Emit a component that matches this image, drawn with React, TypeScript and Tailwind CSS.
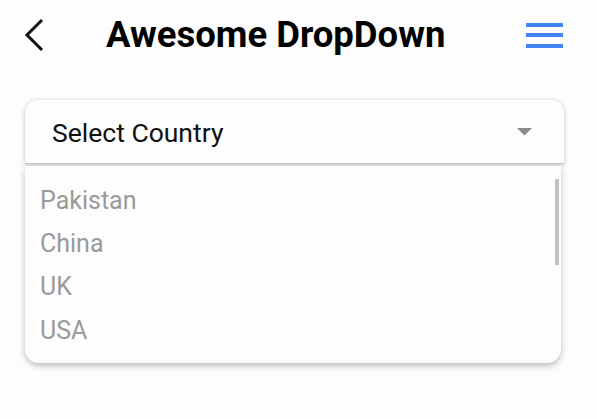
import React from "react";

export default function App() {
  const items = ["Pakistan", "China", "UK", "USA"];
  return (
    <div
      className="w-[597px] h-[419px] bg-[#fdfdfd] overflow-hidden"
      style={{ fontFamily: "Roboto, 'Liberation Sans', sans-serif" }}
    >
      <div className="h-[70px] flex items-center pl-[24px] pr-[34px]">
        <svg width="20" height="34" viewBox="0 0 20 34" className="shrink-0">
          <path d="M18 2 L3 17 L18 32" fill="none" stroke="#111" strokeWidth="3" />
        </svg>
        <div className="ml-[62px] text-[36.5px] font-bold text-black leading-none">
          Awesome DropDown
        </div>
        <div className="ml-auto flex flex-col gap-[6.5px]">
          <div className="w-[37px] h-[4px] bg-[#3f86f4]" />
          <div className="w-[37px] h-[4px] bg-[#3f86f4]" />
          <div className="w-[37px] h-[4px] bg-[#3f86f4]" />
        </div>
      </div>
      <div className="pl-[25px] pr-[33px] pt-[30px]">
        <div className="h-[64px] bg-[#fdfdfd] rounded-t-[13px] shadow-[0_1px_5px_rgba(0,0,0,0.25)] flex items-center pl-[27px] pr-[32px] border-b border-[#c8c8c8]">
          <span className="text-[26.5px] text-[#111] mt-[2px]">Select Country</span>
          <svg width="15" height="8" viewBox="0 0 15 8" className="ml-auto">
            <path d="M0 0 L15 0 L7.5 7.5 Z" fill="#8a8a8a" />
          </svg>
        </div>
        <div className="mt-[2px] mr-[3px] h-[197px] bg-[#fdfdfd] rounded-b-[14px] shadow-[0_3px_6px_rgba(0,0,0,0.25)] relative pt-[13px] pl-[15px]">
          <div className="flex flex-col">
            {items.map((c) => (
              <div key={c} className="h-[43.3px] flex items-center text-[25px] text-[#9a9a9a]">
                {c}
              </div>
            ))}
          </div>
          <div className="absolute right-[2px] top-[13px] w-[4px] h-[86px] bg-[#c2c2c2]" />
        </div>
      </div>
    </div>
  );
}
